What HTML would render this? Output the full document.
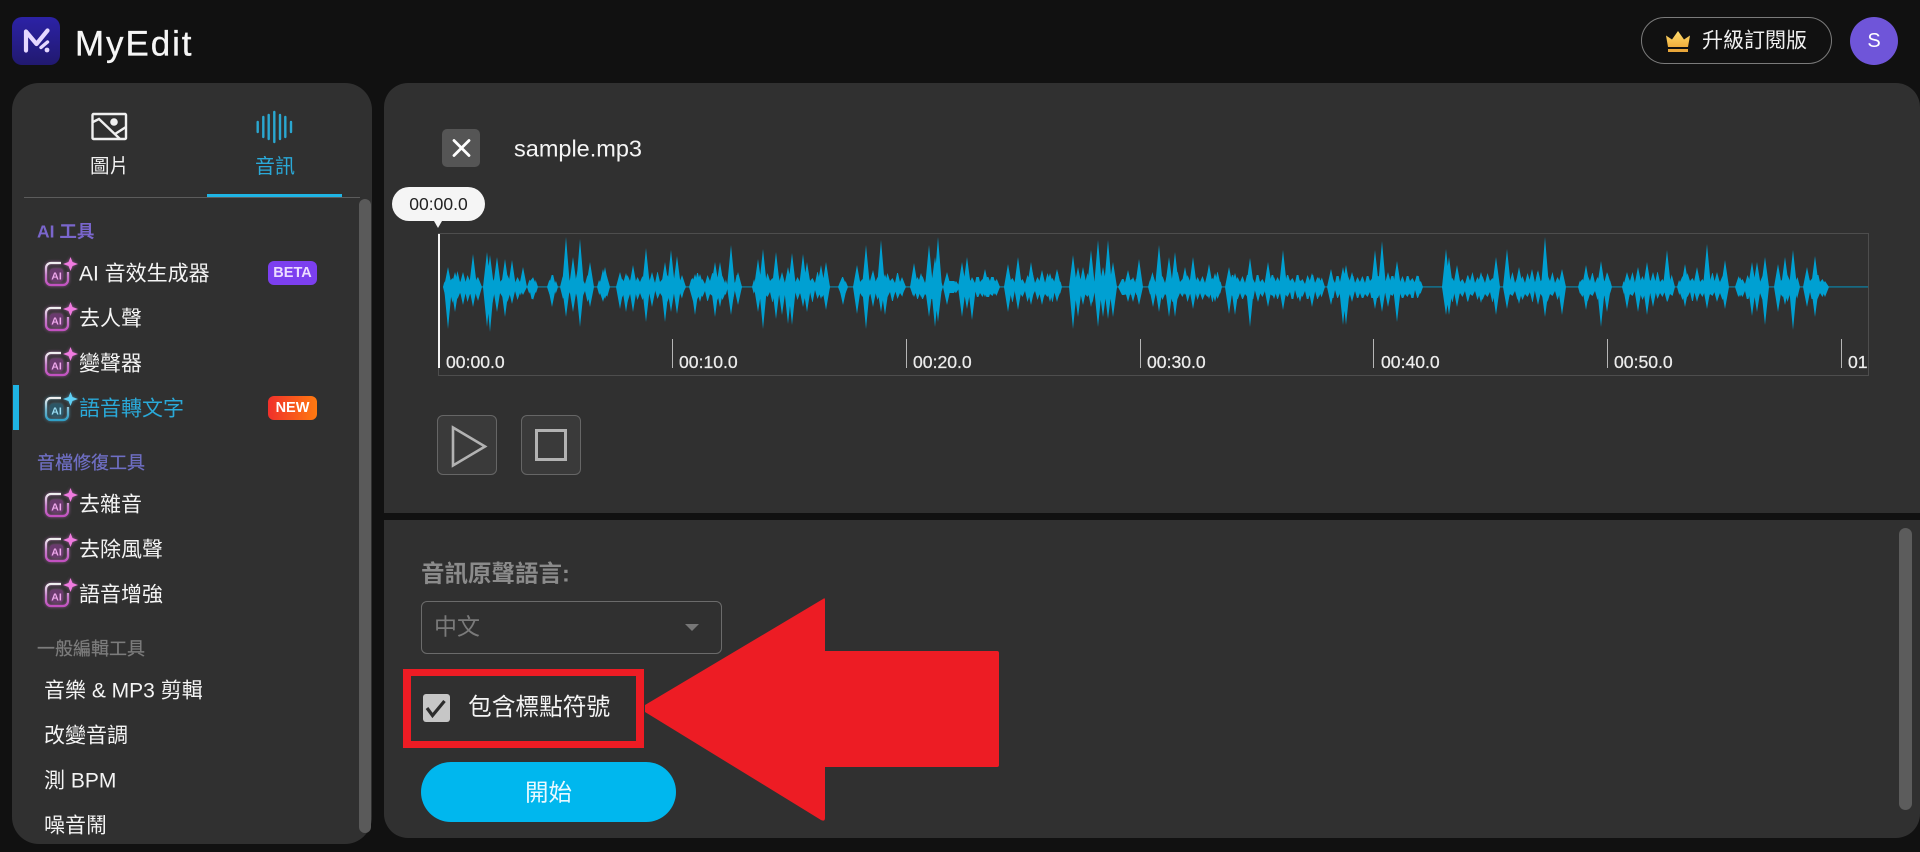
<!DOCTYPE html>
<html lang="zh-Hant">
<head>
<meta charset="utf-8">
<title>MyEdit</title>
<style>
html,body{margin:0;padding:0;width:1920px;height:852px;overflow:hidden;background:#111;}
body{position:relative;font-family:"Liberation Sans","Noto Sans CJK TC",sans-serif;color:#f2f2f2;}
.a{position:absolute;}
.t{position:absolute;line-height:1;white-space:nowrap;transform:translateY(-50%);}
.item{font-size:21px;color:#f4f4f4;left:79px;}
.plain{left:44px;}
.sec{font-size:17.5px;left:37px;-webkit-text-stroke:.2px currentColor;}
.ico{position:absolute;left:42px;width:36px;height:32px;overflow:visible;filter:drop-shadow(0 0 1.5px rgba(225,120,220,.55));}
.ico.c{filter:drop-shadow(0 0 1.5px rgba(90,190,230,.55));}
.badge{position:absolute;left:268px;width:49px;height:24px;border-radius:6px;font-size:14.5px;font-weight:700;line-height:24px;text-align:center;}
.tick{position:absolute;top:339px;width:1px;height:29px;background:#b5b5b5;}
.lab{position:absolute;top:353px;font-size:17.6px;line-height:18px;color:#ececec;white-space:nowrap;overflow:hidden;-webkit-text-stroke:.25px #ececec;}
</style>
</head>
<body>
<svg class="a" style="left:0;top:0;width:0;height:0">
<defs>
<linearGradient id="pk" x1="0" y1="0" x2="0" y2="1"><stop offset="0" stop-color="#f0f0f0"/><stop offset=".55" stop-color="#c77ccb"/><stop offset="1" stop-color="#c250c0"/></linearGradient>
<linearGradient id="cy" x1="0" y1="0" x2="0" y2="1"><stop offset="0" stop-color="#f0f0f0"/><stop offset=".55" stop-color="#6fb3cc"/><stop offset="1" stop-color="#2f9fc6"/></linearGradient>
<linearGradient id="gold" x1="0" y1="0" x2="0" y2="1"><stop offset="0" stop-color="#ffdc6e"/><stop offset="1" stop-color="#f0ae3c"/></linearGradient>
<linearGradient id="lg" x1="0" y1="0" x2="0" y2="1"><stop offset="0" stop-color="#2c22a6"/><stop offset="1" stop-color="#21196f"/></linearGradient>
<pattern id="jag" patternUnits="userSpaceOnUse" x="0" y="257" width="40" height="60">
<path fill="#00a0d2" d="M0 25L2.500 19 5 26 7.500 16 10 24 12.500 21 15 26 17.500 14 20 25 22.500 22 25 27 27.500 18 30 24 32.500 15 35 26 37.500 20 40 25V36L37.500 43 35 34 32.500 39 30 37 27.500 45 25 34 22.500 40 20 36 17.500 42 15 33 12.500 46 10 35 7.500 40 5 37 2.500 43 0 36z"/>
</pattern>
</defs>
</svg>

<!-- Header -->
<svg class="a" style="left:12px;top:17px" width="48" height="48" viewBox="12 17 48 48">
<rect x="12" y="17" width="48" height="48" rx="10" fill="url(#lg)"/>
<path d="M26 50.500V31.500L36.500 44 47.500 30.500" fill="none" stroke="#e5d8ff" stroke-width="4.200" stroke-linecap="round" stroke-linejoin="round"/>
<path d="M41 47.500l6.500-5.500" fill="none" stroke="#e5d8ff" stroke-width="3.400" stroke-linecap="round"/>
<circle cx="47" cy="50" r="2.400" fill="#e5d8ff"/>
</svg>
<div class="t" style="left:75px;top:44px;font-size:35px;letter-spacing:1.900px;color:#f6f6f6;-webkit-text-stroke:.3px #f6f6f6;">MyEdit</div>

<div class="a" style="left:1641px;top:17px;width:189px;height:45px;border:1.500px solid #7b7b7b;border-radius:24px;"></div>
<svg class="a" style="left:1664px;top:29px" width="28" height="25" viewBox="1664 29 28 25">
<path d="M1668 47L1666 35.500 1672 39.500 1678 31 1684 39.500 1690 35.500 1688 47z" fill="url(#gold)"/>
<rect x="1668" y="49" width="20" height="3" fill="#e8a63a"/>
</svg>
<div class="t" style="left:1702px;top:41px;font-size:21px;color:#f0f0f0;">升級訂閱版</div>
<div class="a" style="left:1850px;top:17px;width:48px;height:48px;border-radius:50%;background:#6f55d9;text-align:center;line-height:48px;font-size:20px;color:#fff;">S</div>

<!-- Sidebar -->
<div class="a" style="left:12px;top:83px;width:360px;height:761px;background:#303030;border-radius:27px;"></div>
<svg class="a" style="left:90px;top:111px" width="40" height="30" viewBox="90 111 40 30" fill="none" stroke="#f0f0f0" stroke-width="2.400">
<rect x="92.500" y="114" width="33.500" height="25" rx="1"/>
<circle cx="114" cy="122" r="3.800" fill="#f0f0f0" stroke="none"/>
<path d="M93 122l6-3 21 20M115 134l11-7"/>
</svg>
<div class="t" style="left:90px;top:167px;font-size:19.5px;">圖片</div>
<svg class="a" style="left:254px;top:109px" width="42" height="36" viewBox="254 109 42 36" stroke="#2aa7d0" stroke-width="2.400" stroke-linecap="round">
<path d="M257.700 122v10M263.300 117v20M268.700 115v24M274.300 112v30M280 115v24M285.300 117v20M291 122v10"/>
</svg>
<div class="t" style="left:255px;top:167px;font-size:20px;color:#2aa9d8;">音訊</div>
<div class="a" style="left:24px;top:197px;width:336px;height:1px;background:#5c5c5c;"></div>
<div class="a" style="left:207px;top:194px;width:135px;height:3px;background:#1fb4e4;"></div>
<div class="a" style="left:359px;top:199px;width:12px;height:634px;background:#5a5a5a;border-radius:6px;"></div>

<div class="t sec" style="top:232px;color:#7a66cc;font-weight:700;-webkit-text-stroke:0;">AI 工具</div>

<svg class="ico" style="top:256px" viewBox="0 0 36 32"><path d="M19 7H9a5 5 0 0 0-5 5v12a5 5 0 0 0 5 5h12a5 5 0 0 0 5-5v-8" fill="none" stroke="url(#pk)" stroke-width="2.200"/><rect x="8" y="12.500" width="13" height="13" rx="3" fill="#6a3a6e"/><text x="14.500" y="23.500" font-size="10.500" font-weight="700" text-anchor="middle" fill="#efa8ec" font-family="Liberation Sans">AI</text><path d="M28.500 1L30.500 6 36 8 30.500 10 28.500 15 26.500 10 21 8 26.500 6z" fill="#f07be0"/></svg>
<div class="t item" style="top:274px;">AI 音效生成器</div>
<div class="badge" style="top:261px;background:#7c3fef;color:#ecdcff;">BETA</div>

<svg class="ico" style="top:301px" viewBox="0 0 36 32"><path d="M19 7H9a5 5 0 0 0-5 5v12a5 5 0 0 0 5 5h12a5 5 0 0 0 5-5v-8" fill="none" stroke="url(#pk)" stroke-width="2.200"/><rect x="8" y="12.500" width="13" height="13" rx="3" fill="#6a3a6e"/><text x="14.500" y="23.500" font-size="10.500" font-weight="700" text-anchor="middle" fill="#efa8ec" font-family="Liberation Sans">AI</text><path d="M28.500 1L30.500 6 36 8 30.500 10 28.500 15 26.500 10 21 8 26.500 6z" fill="#f07be0"/></svg>
<div class="t item" style="top:319px;">去人聲</div>

<svg class="ico" style="top:346px" viewBox="0 0 36 32"><path d="M19 7H9a5 5 0 0 0-5 5v12a5 5 0 0 0 5 5h12a5 5 0 0 0 5-5v-8" fill="none" stroke="url(#pk)" stroke-width="2.200"/><rect x="8" y="12.500" width="13" height="13" rx="3" fill="#6a3a6e"/><text x="14.500" y="23.500" font-size="10.500" font-weight="700" text-anchor="middle" fill="#efa8ec" font-family="Liberation Sans">AI</text><path d="M28.500 1L30.500 6 36 8 30.500 10 28.500 15 26.500 10 21 8 26.500 6z" fill="#f07be0"/></svg>
<div class="t item" style="top:364px;">變聲器</div>

<div class="a" style="left:13px;top:385px;width:6px;height:45px;background:#1fb4e4;"></div>
<svg class="ico c" style="top:391px" viewBox="0 0 36 32"><path d="M19 7H9a5 5 0 0 0-5 5v12a5 5 0 0 0 5 5h12a5 5 0 0 0 5-5v-8" fill="none" stroke="url(#cy)" stroke-width="2.200"/><rect x="8" y="12.500" width="13" height="13" rx="3" fill="#2c5666"/><text x="14.500" y="23.500" font-size="10.500" font-weight="700" text-anchor="middle" fill="#9adcf2" font-family="Liberation Sans">AI</text><path d="M28.500 1L30.500 6 36 8 30.500 10 28.500 15 26.500 10 21 8 26.500 6z" fill="#5fd0f5"/></svg>
<div class="t item" style="top:409px;color:#2aa9d8;">語音轉文字</div>
<div class="badge" style="top:396px;background:linear-gradient(90deg,#f0302b,#ff7a10);color:#fff;">NEW</div>

<div class="t sec" style="top:463px;font-size:18px;color:#6f6fc4;">音檔修復工具</div>

<svg class="ico" style="top:487px" viewBox="0 0 36 32"><path d="M19 7H9a5 5 0 0 0-5 5v12a5 5 0 0 0 5 5h12a5 5 0 0 0 5-5v-8" fill="none" stroke="url(#pk)" stroke-width="2.200"/><rect x="8" y="12.500" width="13" height="13" rx="3" fill="#6a3a6e"/><text x="14.500" y="23.500" font-size="10.500" font-weight="700" text-anchor="middle" fill="#efa8ec" font-family="Liberation Sans">AI</text><path d="M28.500 1L30.500 6 36 8 30.500 10 28.500 15 26.500 10 21 8 26.500 6z" fill="#f07be0"/></svg>
<div class="t item" style="top:505px;">去雜音</div>

<svg class="ico" style="top:532px" viewBox="0 0 36 32"><path d="M19 7H9a5 5 0 0 0-5 5v12a5 5 0 0 0 5 5h12a5 5 0 0 0 5-5v-8" fill="none" stroke="url(#pk)" stroke-width="2.200"/><rect x="8" y="12.500" width="13" height="13" rx="3" fill="#6a3a6e"/><text x="14.500" y="23.500" font-size="10.500" font-weight="700" text-anchor="middle" fill="#efa8ec" font-family="Liberation Sans">AI</text><path d="M28.500 1L30.500 6 36 8 30.500 10 28.500 15 26.500 10 21 8 26.500 6z" fill="#f07be0"/></svg>
<div class="t item" style="top:550px;">去除風聲</div>

<svg class="ico" style="top:577px" viewBox="0 0 36 32"><path d="M19 7H9a5 5 0 0 0-5 5v12a5 5 0 0 0 5 5h12a5 5 0 0 0 5-5v-8" fill="none" stroke="url(#pk)" stroke-width="2.200"/><rect x="8" y="12.500" width="13" height="13" rx="3" fill="#6a3a6e"/><text x="14.500" y="23.500" font-size="10.500" font-weight="700" text-anchor="middle" fill="#efa8ec" font-family="Liberation Sans">AI</text><path d="M28.500 1L30.500 6 36 8 30.500 10 28.500 15 26.500 10 21 8 26.500 6z" fill="#f07be0"/></svg>
<div class="t item" style="top:595px;">語音增強</div>

<div class="t sec" style="top:649px;font-size:18px;color:#7c7c7c;">一般編輯工具</div>
<div class="t item plain" style="top:691px;">音樂 &amp; MP3 剪輯</div>
<div class="t item plain" style="top:736px;">改變音調</div>
<div class="t item plain" style="top:781px;">測 BPM</div>
<div class="t item plain" style="top:826px;">噪音鬧</div>

<!-- Main top -->
<div class="a" style="left:384px;top:83px;width:1536px;height:430px;background:#303030;border-radius:24px 24px 0 0;"></div>
<div class="a" style="left:442px;top:129px;width:38px;height:38px;background:#555;border-radius:5px;"></div>
<svg class="a" style="left:442px;top:129px" width="38" height="38" stroke="#fff" stroke-width="2.800" stroke-linecap="round"><path d="M12 11.500l15 15M27 11.500l-15 15"/></svg>
<div class="t" style="left:514px;top:149px;font-size:23.5px;color:#f5f5f5;">sample.mp3</div>

<div class="a" style="left:438px;top:233px;width:1429px;height:141px;border:1px solid #4d4d4d;"></div>

<svg class="a" style="left:0;top:0" width="1920" height="400" fill="#00a0d2">
<rect x="443" y="286.300" width="1425" height="1.200" opacity=".75"/>
<path fill="url(#jag)" d="M443 287l4-16H476l4 16-4 16H447zM483 287l4-16H519l4 16-4 16H487zM527 287l4-12H534l4 12-4 12H531zM547 287l4-12H554l4 12-4 12H551zM560 287l4-16H589l4 16-4 16H564zM597 287l4-14H606l4 14-4 14H601zM618 287l4-15H681l4 15-4 15H622zM689 287l4-14H724l4 14-4 14H693zM728 287l4-12H738l4 12-4 12H732zM752 287l4-15H826l4 15-4 15H756zM838 287l4-10H844l4 10-4 10H842zM853 287l4-14H901l4 14-4 14H857zM910 287l4-12H939l4 12-4 12H914zM945 287l4-6H956l4 6-4 6H949zM960 287l4-10H996l4 10-4 10H964zM1004 287l4-15H1058l4 15-4 15H1008zM1072 287l4-16H1113l4 16-4 16H1076zM1118 287l4-8H1139l4 8-4 8H1122zM1148 287l4-15H1218l4 15-4 15H1152zM1228 287l4-12H1321l4 12-4 12H1232zM1328 287l4-11H1419l4 11-4 11H1332zM1442 287l4-15H1496l4 15-4 15H1446zM1505 287l4-15H1561l4 15-4 15H1509zM1578 287l4-14H1608l4 14-4 14H1582zM1622 287l4-15H1671l4 15-4 15H1626zM1677 287l4-14H1724l4 14-4 14H1681zM1735 287l4-12H1764l4 12-4 12H1739zM1775 287l4-16H1796l4 16-4 16H1779zM1805 287l4-12H1823l4 12-4 12H1809z"/>
<path d="M444 287l4-20 4 20-4 42zM451 287l4-15 4 15-4 25zM459 287l4-15 4 15-4 18zM469 287l4-33 4 33-4 20zM474 287l4-10 4 10-4 14zM483 287l4-35 4 35-4 40zM486 287l4-32 4 32-4 45zM493 287l4-30 4 30-4 25zM501 287l4-28 4 28-4 30zM508 287l4-27 4 27-4 17zM519 287l4-20 4 20-4 8zM529 287l4-10 4 10-4 13zM548 287l4-9 4 9-4 20zM562 287l4-50 4 50-4 30zM569 287l4-30 4 30-4 25zM576 287l4-48 4 48-4 40zM586 287l4-25 4 25-4 20zM599 287l4-18 4 18-4 15z"/>
<path d="M601 287l4-20 4 20-4 12zM616 287l4-15 4 15-4 22zM622 287l4-14 4 14-4 25zM629 287l4-22 4 22-4 25zM642 287l4-39 4 39-4 35zM648 287l4-15 4 15-4 20zM661 287l4-25 4 25-4 35zM667 287l4-37 4 37-4 25zM673 287l4-31 4 31-4 27zM678 287l4-12 4 12-4 8zM691 287l4-13 4 13-4 28zM696 287l4-13 4 13-4 15zM711 287l4-25 4 25-4 30zM716 287l4-25 4 25-4 20zM727 287l4-42 4 42-4 28zM734 287l4-15 4 15-4 18zM754 287l4-28 4 28-4 25zM759 287l4-38 4 38-4 42zM772 287l4-35 4 35-4 32zM778 287l4-15 4 15-4 28zM784 287l4-20 4 20-4 37zM788 287l4-34 4 34-4 38zM799 287l4-33 4 33-4 20zM803 287l4-25 4 25-4 25zM817 287l4-22 4 22-4 12zM822 287l4-25 4 25-4 23zM839 287l4-10 4 10-4 18zM853 287l4-22 4 22-4 27zM862 287l4-42 4 42-4 42zM869 287l4-17 4 17-4 20zM877 287l4-47 4 47-4 25zM881 287l4-13 4 13-4 28zM889 287l4-7 4 7-4 12zM898 287l4-10 4 10-4 8z"/>
<path d="M910 287l4-24 4 24-4 10zM917 287l4-14 4 14-4 10zM925 287l4-42 4 42-4 30zM931 287l4-30 4 30-4 40zM934 287l4-50 4 50-4 35zM943 287l4-15 4 15-4 18zM951 287l4-5 4 5-4 5zM958 287l4-25 4 25-4 30zM963 287l4-30 4 30-4 22zM968 287l4-10 4 10-4 33zM981 287l4-18 4 18-4 10zM991 287l4-7 4 7-4 8zM1004 287l4-23 4 23-4 25zM1014 287l4-30 4 30-4 23zM1027 287l4-25 4 25-4 18zM1038 287l4-17 4 17-4 18zM1046 287l4-14 4 14-4 15zM1053 287l4-18 4 18-4 15zM1069 287l4-32 4 32-4 42zM1074 287l4-20 4 20-4 30zM1079 287l4-20 4 20-4 18zM1087 287l4-37 4 37-4 20zM1094 287l4-47 4 47-4 40zM1099 287l4-20 4 20-4 30zM1104 287l4-47 4 47-4 32zM1109 287l4-25 4 25-4 30zM1124 287l4-17 4 17-4 15zM1129 287l4-10 4 10-4 15zM1135 287l4-28 4 28-4 18zM1149 287l4-12 4 12-4 20zM1155 287l4-42 4 42-4 25zM1165 287l4-30 4 30-4 30zM1171 287l4-35 4 35-4 30zM1181 287l4-20 4 20-4 8zM1189 287l4-30 4 30-4 22zM1205 287l4-23 4 23-4 12zM1211 287l4-14 4 14-4 15z"/>
<path d="M1225 287l4-20 4 20-4 27zM1231 287l4-14 4 14-4 28zM1246 287l4-29 4 29-4 40zM1254 287l4-10 4 10-4 15zM1264 287l4-25 4 25-4 20zM1270 287l4-10 4 10-4 12zM1279 287l4-37 4 37-4 23zM1296 287l4-7 4 7-4 15zM1308 287l4-14 4 14-4 20zM1315 287l4-10 4 10-4 10zM1327 287l4-18 4 18-4 18zM1339 287l4-20 4 20-4 38zM1342 287l4-22 4 22-4 38zM1348 287l4-15 4 15-4 15zM1358 287l4-10 4 10-4 8zM1371 287l4-37 4 37-4 22zM1378 287l4-46 4 46-4 25zM1384 287l4-15 4 15-4 20zM1393 287l4-26 4 26-4 35zM1406 287l4-6 4 6-4 8zM1413 287l4-12 4 12-4 5zM1442 287l4-38 4 38-4 28zM1445 287l4-30 4 30-4 28zM1453 287l4-22 4 22-4 20zM1464 287l4-12 4 12-4 15zM1477 287l4-15 4 15-4 16zM1492 287l4-30 4 30-4 28zM1503 287l4-38 4 38-4 22zM1515 287l4-20 4 20-4 17zM1528 287l4-18 4 18-4 12zM1534 287l4-17 4 17-4 18zM1541 287l4-50 4 50-4 30zM1558 287l4-18 4 18-4 28zM1582 287l4-22 4 22-4 23zM1597 287l4-26 4 26-4 40zM1603 287l4-15 4 15-4 25zM1623 287l4-15 4 15-4 22zM1634 287l4-20 4 20-4 25zM1643 287l4-25 4 25-4 28zM1649 287l4-15 4 15-4 20zM1663 287l4-37 4 37-4 15zM1681 287l4-23 4 23-4 20zM1693 287l4-20 4 20-4 15zM1703 287l4-43 4 43-4 22zM1713 287l4-15 4 15-4 15zM1721 287l4-27 4 27-4 22zM1736 287l4-10 4 10-4 10zM1748 287l4-25 4 25-4 29zM1753 287l4-25 4 25-4 25zM1761 287l4-30 4 30-4 38zM1774 287l4-23 4 23-4 25zM1781 287l4-30 4 30-4 18zM1789 287l4-37 4 37-4 43zM1803 287l4-20 4 20-4 20zM1811 287l4-31 4 31-4 30zM1821 287l4-6 4 6-4 10z"/>
</svg>

<!-- time ticks -->
<div class="a" style="left:438px;top:234px;width:1.500px;height:134px;background:#f2f2f2;"></div>
<div class="tick" style="left:672px"></div>
<div class="tick" style="left:906px"></div>
<div class="tick" style="left:1140px"></div>
<div class="tick" style="left:1373px"></div>
<div class="tick" style="left:1607px"></div>
<div class="tick" style="left:1841px"></div>
<div class="lab" style="left:446px">00:00.0</div>
<div class="lab" style="left:679px">00:10.0</div>
<div class="lab" style="left:913px">00:20.0</div>
<div class="lab" style="left:1147px">00:30.0</div>
<div class="lab" style="left:1381px">00:40.0</div>
<div class="lab" style="left:1614px">00:50.0</div>
<div class="lab" style="left:1848px;width:19px">01:00.0</div>

<!-- tooltip -->
<div class="a" style="left:392px;top:187px;width:93px;height:34px;background:#f5f5f5;border-radius:17px;color:#222;font-size:17.500px;line-height:34px;text-align:center;">00:00.0</div>
<div class="a" style="left:434px;top:221px;width:0;height:0;border-left:4.500px solid transparent;border-right:4.500px solid transparent;border-top:7px solid #f5f5f5;"></div>

<!-- play / stop -->
<div class="a" style="left:437px;top:415px;width:58px;height:58px;background:#3a3a3a;border:1px solid #666;border-radius:6px;"></div>
<svg class="a" style="left:437px;top:415px" width="60" height="60" fill="none" stroke="#b2b2b2" stroke-width="2.600"><path d="M16 12.500L48 31.500 16 50.500z"/></svg>
<div class="a" style="left:521px;top:415px;width:58px;height:58px;background:#3a3a3a;border:1px solid #666;border-radius:6px;"></div>
<div class="a" style="left:535px;top:429px;width:26px;height:26px;border:3px solid #b2b2b2;"></div>

<!-- Main bottom -->
<div class="a" style="left:384px;top:520px;width:1536px;height:318px;background:#303030;border-radius:0 0 24px 24px;"></div>
<div class="a" style="left:1899px;top:528px;width:13px;height:282px;background:#5c5c5c;border-radius:7px;"></div>

<div class="t" style="left:421px;top:574px;font-size:23.5px;font-weight:700;color:#8b8b8b;">音訊原聲語言:</div>
<div class="a" style="left:421px;top:601px;width:299px;height:51px;border:1px solid #6b6b6b;border-radius:6px;"></div>
<div class="t" style="left:434px;top:627px;font-size:23px;color:#7a7a7a;">中文</div>
<div class="a" style="left:685px;top:624px;width:0;height:0;border-left:7.500px solid transparent;border-right:7.500px solid transparent;border-top:7.500px solid #777;"></div>

<div class="a" style="left:403px;top:669px;width:225px;height:65px;border-style:solid;border-color:#ed1c24;border-width:7px 8px;"></div>
<div class="a" style="left:423px;top:694px;width:27px;height:28px;background:#c6c6c6;border-radius:3px;"></div>
<svg class="a" style="left:423px;top:694px" width="27" height="28" fill="none" stroke="#2c2c2c" stroke-width="3.200"><path d="M4 14l5.500 7.500L21.500 7"/></svg>
<div class="t" style="left:468px;top:709px;font-size:23.7px;color:#f4f4f4;">包含標點符號</div>

<div class="a" style="left:421px;top:762px;width:255px;height:60px;background:#00b7ee;border-radius:30px;"></div>
<div class="t" style="left:525px;top:793px;font-size:23.5px;color:#e9f9ff;">開始</div>

<svg class="a" style="left:640px;top:590px" width="370" height="240" viewBox="640 590 370 240">
<path d="M645 705L823 599Q825 597 825 600V651H997Q999 651 999 653V765Q999 767 997 767H825V818Q825 822 821 820L645 712z" fill="#ed1c24"/>
</svg>
</body>
</html>
